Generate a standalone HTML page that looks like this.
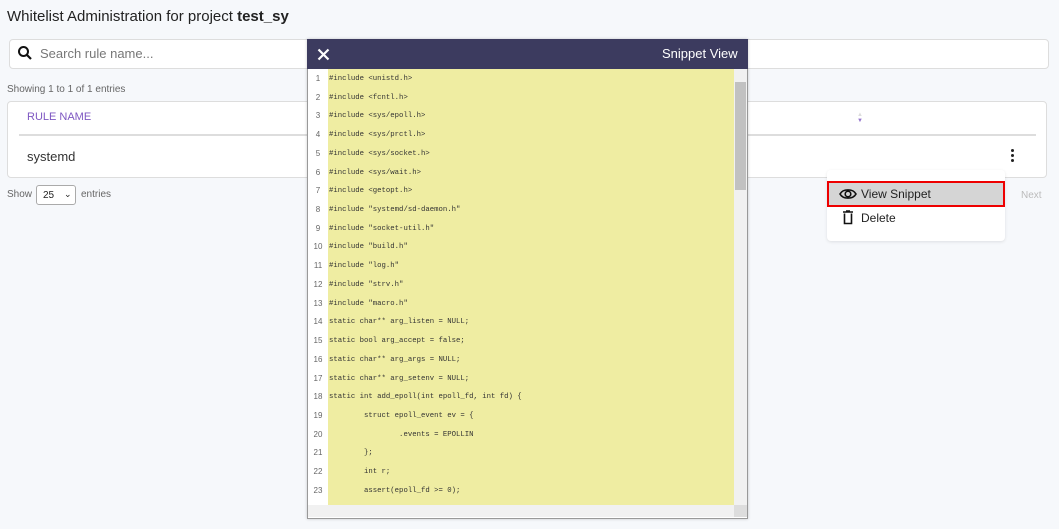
<!DOCTYPE html>
<html><head><style>
*{box-sizing:border-box;margin:0;padding:0}
body{width:1059px;height:529px;background:#f6f8fb;font-family:"Liberation Sans",sans-serif;position:relative;overflow:hidden;color:#333}
.abs{position:absolute}
.code div{height:18.73px;line-height:18.73px;white-space:pre}
</style></head><body>
<div class="abs" style="left:7px;top:8px;font-size:15px;color:#222">Whitelist Administration for project <b>test_sy</b></div>
<div class="abs" style="left:9px;top:39px;width:1040px;height:30px;background:#fff;border:1px solid #ddd;border-radius:4px"></div>
<svg class="abs" style="left:17px;top:45px" width="16" height="16" viewBox="0 0 16 16"><circle cx="6.5" cy="6.5" r="4.5" fill="none" stroke="#111" stroke-width="2"/><path d="M10 10l4 4" stroke="#111" stroke-width="2.2"/></svg>
<div class="abs" style="left:40px;top:46px;font-size:13px;color:#777">Search rule name...</div>
<div class="abs" style="left:7px;top:84px;font-size:10px;color:#666">Showing 1 to 1 of 1 entries</div>
<div class="abs" style="left:7px;top:101px;width:1040px;height:77px;background:#fff;border:1px solid #ddd;border-radius:4px"></div>
<div class="abs" style="left:19px;top:134px;width:1017px;height:2px;background:#ddd"></div>
<div class="abs" style="left:27px;top:111px;font-size:11px;color:#7e57c2">RULE NAME</div>
<div class="abs" style="left:857px;top:112px;font-size:6px;line-height:6px;color:#9575cd;text-align:center"><span style="color:#ddd">▲</span><br>▼</div>
<div class="abs" style="left:27px;top:149px;font-size:13px;color:#333">systemd</div>
<div class="abs" style="left:1011px;top:149px;width:4px;font-size:0"><div style="width:3px;height:3px;background:#222;border-radius:50%;margin-bottom:2px"></div><div style="width:3px;height:3px;background:#222;border-radius:50%;margin-bottom:2px"></div><div style="width:3px;height:3px;background:#222;border-radius:50%"></div></div>
<div class="abs" style="left:7px;top:189px;font-size:10px;color:#666">Show</div>
<div class="abs" style="left:36px;top:185px;width:40px;height:20px;border:1px solid #aaa;border-radius:3px;background:#fff;font-size:10px;padding:4px 0 0 6px;color:#222">25 <span style="position:absolute;left:27px;top:3px;font-size:9px">⌄</span></div>
<div class="abs" style="left:81px;top:189px;font-size:10px;color:#666">entries</div>
<div class="abs" style="left:1021px;top:190px;font-size:10px;color:#bbb">Next</div>
<div class="abs" style="left:827px;top:170px;width:178px;height:71px;background:#fff;border-radius:4px;box-shadow:0 1px 3px rgba(0,0,0,.1)"></div>
<div class="abs" style="left:827px;top:181px;width:178px;height:26px;background:#d5d5d5;border:2px solid #e00"></div>
<svg class="abs" style="left:839px;top:187px" width="18" height="14" viewBox="0 0 18 14"><path d="M1 7C4 1.5 14 1.5 17 7C14 12.5 4 12.5 1 7Z" fill="none" stroke="#111" stroke-width="1.6"/><circle cx="9" cy="7" r="2.8" fill="none" stroke="#111" stroke-width="1.6"/></svg>
<div class="abs" style="left:861px;top:187px;font-size:12px;color:#222">View Snippet</div>
<svg class="abs" style="left:842px;top:210px" width="12" height="15" viewBox="0 0 12 15"><path d="M1 2h10M4 1h4M2.5 3.5v10h7v-10" fill="none" stroke="#111" stroke-width="1.6"/></svg>
<div class="abs" style="left:861px;top:211px;font-size:12px;color:#222">Delete</div>
<div class="abs" style="left:307px;top:39px;width:441px;height:480px;background:#fff;border:1px solid #999;box-shadow:0 0 3px rgba(0,0,0,.2)"></div>
<div class="abs" style="left:307px;top:39px;width:441px;height:30px;background:#3c3b5f"></div>
<svg class="abs" style="left:317px;top:48px" width="13" height="13" viewBox="0 0 13 13"><path d="M1.5 1.5l10 10M11.5 1.5l-10 10" stroke="#fff" stroke-width="2.2"/></svg>
<div class="abs" style="left:662px;top:46px;font-size:13px;color:#fff">Snippet View</div>
<div class="abs" style="left:328px;top:69px;width:406px;height:436px;background:#efeda2"></div>
<div class="abs" style="left:734px;top:69px;width:13px;height:436px;background:#f1f1f1"></div>
<div class="abs" style="left:735px;top:82px;width:11px;height:108px;background:#c1c1c1"></div>
<div class="abs" style="left:308px;top:505px;width:426px;height:12px;background:#f1f1f1"></div>
<div class="abs" style="left:734px;top:505px;width:13px;height:12px;background:#ddd"></div>
<div class="abs code" style="left:308px;top:70px;width:20px;text-align:center;font-size:8px;color:#666">
<div>1</div><div>2</div><div>3</div><div>4</div><div>5</div><div>6</div><div>7</div><div>8</div><div>9</div><div>10</div><div>11</div><div>12</div><div>13</div><div>14</div><div>15</div><div>16</div><div>17</div><div>18</div><div>19</div><div>20</div><div>21</div><div>22</div><div>23</div></div>
<div class="abs code" style="left:329px;top:70px;font-family:'Liberation Mono',monospace;font-size:7.3px;color:#333">
<div>#include &lt;unistd.h&gt;</div><div>#include &lt;fcntl.h&gt;</div><div>#include &lt;sys/epoll.h&gt;</div><div>#include &lt;sys/prctl.h&gt;</div><div>#include &lt;sys/socket.h&gt;</div><div>#include &lt;sys/wait.h&gt;</div><div>#include &lt;getopt.h&gt;</div><div>#include "systemd/sd-daemon.h"</div><div>#include "socket-util.h"</div><div>#include "build.h"</div><div>#include "log.h"</div><div>#include "strv.h"</div><div>#include "macro.h"</div><div>static char** arg_listen = NULL;</div><div>static bool arg_accept = false;</div><div>static char** arg_args = NULL;</div><div>static char** arg_setenv = NULL;</div><div>static int add_epoll(int epoll_fd, int fd) {</div><div>        struct epoll_event ev = {</div><div>                .events = EPOLLIN</div><div>        };</div><div>        int r;</div><div>        assert(epoll_fd &gt;= 0);</div></div>
</body></html>
